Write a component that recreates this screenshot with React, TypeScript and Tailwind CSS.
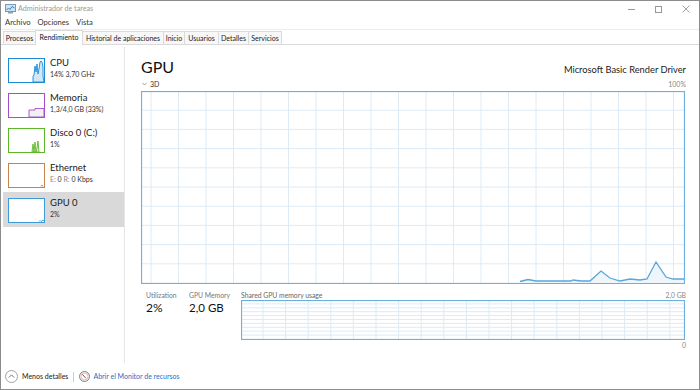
import React from "react";

const FONT = { fontFamily: "'Lato', 'Liberation Sans', sans-serif" };

function Thumb({ color, fill, children }: { color: string; fill: string; children?: React.ReactNode }) {
  return (
    <svg width="37" height="25" viewBox="0 0 37 25" className="shrink-0">
      <rect x="0.5" y="0.5" width="36" height="24" fill="white" stroke={color} strokeWidth="1" />
      <g fill={fill} stroke={color} strokeWidth="0.9">
        {children}
      </g>
    </svg>
  );
}

function SideItem({
  name,
  sub,
  selected,
  thumb,
}: {
  name: string;
  sub: React.ReactNode;
  selected?: boolean;
  thumb: React.ReactNode;
}) {
  return (
    <div className={`flex h-[35px] items-start gap-[5px] pl-[5px] pt-[6px] ${selected ? "bg-[#d9d9d9]" : ""}`}>
      {thumb}
      <div className="flex flex-col leading-none">
        <span className="mt-[0px] text-[9.5px] text-[#1a1a1a]">{name}</span>
        <span className="mt-[3px] text-[7px] text-[#333]">{sub}</span>
      </div>
    </div>
  );
}

function BigChart() {
  const W = 543;
  const H = 192;
  const cols: number[] = [];
  for (let x = 10; x < W; x += 27.5) cols.push(x);
  const rows: number[] = [];
  for (let y = 19.2; y < H - 1; y += 19.2) rows.push(y);
  const pts: [number, number][] = [
    [379, 190.5], [387, 188.5], [395, 190], [430, 190], [432, 189], [440, 190], [449, 190], [460, 180], [469, 187], [479, 190], [489, 188], [499, 189], [506, 188], [515, 171], [525, 186], [532, 188], [543, 188],
  ];
  const line = pts.map((p) => p.join(",")).join(" ");
  const area = `379,191 ${line} 543,191`;
  return (
    <svg width={W + 1} height={H + 1} viewBox={`0 0 ${W + 1} ${H + 1}`} className="block">
      <rect x="0" y="0" width={W + 1} height={H + 1} fill="white" />
      {cols.map((x) => (
        <line key={"c" + x} x1={x} y1="0" x2={x} y2={H} stroke="#dcebf6" strokeWidth="1" />
      ))}
      {rows.map((y) => (
        <line key={"r" + y} x1="0" y1={y} x2={W} y2={y} stroke="#dcebf6" strokeWidth="1" />
      ))}
      <polygon points={area} fill="#eef5fb" />
      <polyline points={line} fill="none" stroke="#5aa6d9" strokeWidth="1.3" />
      <rect x="0.5" y="0.5" width={W} height={H} fill="none" stroke="#6cb0de" strokeWidth="1.2" />
    </svg>
  );
}

function SmallChart() {
  const W = 443;
  const H = 39;
  const cols: number[] = [];
  for (let x = 22; x < W; x += 22.6) cols.push(x);
  const rows: number[] = [];
  for (let y = 3.9; y < H - 1; y += 3.9) rows.push(y);
  return (
    <svg width={W + 1} height={H + 1} viewBox={`0 0 ${W + 1} ${H + 1}`} className="block">
      <rect x="0" y="0" width={W + 1} height={H + 1} fill="white" />
      {cols.map((x) => (
        <line key={"c" + x} x1={x} y1="0" x2={x} y2={H} stroke="#dcebf6" strokeWidth="1" />
      ))}
      {rows.map((y) => (
        <line key={"r" + y} x1="0" y1={y} x2={W} y2={y} stroke="#dcebf6" strokeWidth="1" />
      ))}
      <rect x="0.5" y="0.5" width={W} height={H} fill="none" stroke="#6cb0de" strokeWidth="1.2" />
    </svg>
  );
}

export default function App() {
  const tabs: [string, string][] = [
    ["Procesos", "w-[33px]"],
    ["Rendimiento", "w-[48px]"],
    ["Historial de aplicaciones", "w-[82px]"],
    ["Inicio", "w-[22px]"],
    ["Usuarios", "w-[35px]"],
    ["Detalles", "w-[31px]"],
    ["Servicios", "w-[34px]"],
  ];
  return (
    <div style={FONT} className="flex h-[390px] w-[700px] flex-col overflow-hidden border border-[#8c8c8c] bg-white text-[#1a1a1a]">
      {/* Title bar */}
      <div className="flex h-[16px] shrink-0 items-center">
        <svg width="11" height="10" viewBox="0 0 11 10" className="ml-[4px]">
          <rect x="0.5" y="0.5" width="10" height="7" fill="#cfe3f2" stroke="#7a9bb5" />
          <polyline points="1.5,6 3.5,4 5,5.5 7,2.5 9.5,4" fill="none" stroke="#3b82c4" strokeWidth="1" />
          <rect x="3" y="8" width="5" height="1.5" fill="#8aa" />
        </svg>
        <span className="ml-[2px] text-[7.2px] text-[#9a9a9a]">Administrador de tareas</span>
        <div className="ml-auto flex items-center">
          <div className="flex w-[27px] justify-center">
            <div className="h-px w-[7px] bg-[#999]" />
          </div>
          <div className="flex w-[27px] justify-center">
            <div className="h-[7px] w-[7px] border border-[#999]" />
          </div>
          <div className="flex w-[27px] justify-center">
            <svg width="8" height="8" viewBox="0 0 8 8">
              <path d="M0.5 0.5 L7.5 7.5 M7.5 0.5 L0.5 7.5" stroke="#999" strokeWidth="0.9" />
            </svg>
          </div>
        </div>
      </div>
      {/* Menu */}
      <div className="flex h-[13px] shrink-0 items-center gap-[7px] border-b border-[#ececec] pl-[4px] text-[7.6px] text-[#333]">
        <span>Archivo</span>
        <span>Opciones</span>
        <span>Vista</span>
      </div>
      {/* Tabs */}
      <div className="flex h-[15px] shrink-0 items-end border-b border-[#dadada] pl-[2px]">
        {tabs.map(([t, w]) => {
          const sel = t === "Rendimiento";
          return (
            <div
              key={t}
              className={`-mr-px flex shrink-0 items-center justify-center border border-b-0 text-[7px] ${w} ${
                sel ? "relative z-10 -mb-px h-[15px] border-[#dadada] bg-white pb-[2px] text-[#111]" : "h-[13px] border-[#dadada] bg-[#f7f7f7] text-[#222]"
              }`}
            >
              {t}
            </div>
          );
        })}
      </div>
      {/* Body */}
      <div className="flex min-h-0 flex-1">
        {/* Sidebar */}
        <div className="flex w-[124px] shrink-0 flex-col pl-[2px] pt-[2px]">
          <div className="border-r border-[#e6e6e6] pb-[136px] pt-[5px]">
            <SideItem
              name="CPU"
              sub="14% 3,70 GHz"
              thumb={
                <Thumb color="#1c8ad3" fill="#d3e8f6">
                  <polygon points="25,24 25,18 26,17 27,8 28,14 29,6 30,16 31,11 32,4 33,3 34,4 35,9 35,18 36,24" />
                </Thumb>
              }
            />
            <SideItem
              name="Memoria"
              sub="1,3/4,0 GB (33%)"
              thumb={
                <Thumb color="#a64dc8" fill="#f0f0f0">
                  <polygon points="21,24 21,17 27,17 27,15.5 36,15.5 36,24" />
                </Thumb>
              }
            />
            <SideItem
              name="Disco 0 (C:)"
              sub="1%"
              thumb={
                <Thumb color="#5cb82a" fill="#dff0d2">
                  <polygon points="24,24 25,16 26,24 27,14 28,24 29,20 30,13 31,24" />
                </Thumb>
              }
            />
            <SideItem
              name="Ethernet"
              sub={
                <>
                  <span className="text-[#888]">E:</span> 0 <span className="text-[#888]">R:</span> 0 Kbps
                </>
              }
              thumb={
                <Thumb color="#c4844e" fill="none">
                  <polyline points="33,23.5 34,22 35,23.5" />
                </Thumb>
              }
            />
            <SideItem
              name="GPU 0"
              sub="2%"
              selected
              thumb={
                <Thumb color="#3d9ad8" fill="none">
                  <polyline points="31,23.5 32,22.5 33,23.5 34,23 35,22 36,23" />
                </Thumb>
              }
            />
          </div>
        </div>
        {/* Main */}
        <div className="flex min-w-0 flex-1 flex-col pl-[16px] pr-[13px]">
          <div className="mt-[10px] flex h-[20px] items-end justify-between">
            <span className="text-[16px] leading-none text-[#111]">GPU</span>
            <span className="mb-[1px] text-[9.3px] leading-none text-[#222]">Microsoft Basic Render Driver</span>
          </div>
          <div className="mt-[4px] flex h-[10px] items-center justify-between text-[7px] leading-none">
            <span className="flex items-center gap-[3px] pl-[1px] text-[#333]">
              <svg width="5" height="4" viewBox="0 0 5 4">
                <polyline points="0.5,1 2.5,3 4.5,1" fill="none" stroke="#888" strokeWidth="0.8" />
              </svg>
              3D
            </span>
            <span className="text-[#888]">100%</span>
          </div>
          <div className="mt-[2px]">
            <BigChart />
          </div>
          <div className="mt-[8px] flex">
            <div className="flex w-[48px] shrink-0 flex-col pl-[5px]">
              <span className="text-[6.8px] leading-none text-[#777]">Utilization</span>
              <span className="mt-[3px] text-[12px] leading-none text-[#111]">2%</span>
            </div>
            <div className="flex w-[52px] shrink-0 flex-col">
              <span className="text-[6.8px] leading-none text-[#777]">GPU Memory</span>
              <span className="mt-[3px] text-[11.5px] leading-none text-[#111]">2,0 GB</span>
            </div>
            <div className="flex flex-1 flex-col">
              <div className="flex justify-between text-[6.8px] leading-none">
                <span className="text-[#666]">Shared GPU memory usage</span>
                <span className="text-[#888]">2,0 GB</span>
              </div>
              <div className="mt-[1px]">
                <SmallChart />
              </div>
              <div className="mt-[2px] text-right text-[7px] leading-none text-[#888]">0</div>
            </div>
          </div>
        </div>
      </div>
      {/* Footer */}
      <div className="flex h-[28px] shrink-0 items-center pl-[4px] pt-[3px] text-[7px]">
        <svg width="13" height="13" viewBox="0 0 13 13">
          <circle cx="6.5" cy="6.5" r="6" fill="white" stroke="#999" strokeWidth="0.9" />
          <polyline points="3.8,7.6 6.5,4.9 9.2,7.6" fill="none" stroke="#666" strokeWidth="0.9" />
        </svg>
        <span className="ml-[4px] text-[#1a1a1a]">Menos detalles</span>
        <div className="mx-[5px] h-[10px] w-px bg-[#ccc]" />
        <svg width="11" height="11" viewBox="0 0 11 11">
          <circle cx="5.5" cy="5.5" r="5" fill="#f2f2f2" stroke="#777" strokeWidth="0.9" />
          <circle cx="5.5" cy="5.5" r="3.4" fill="white" stroke="#aaa" strokeWidth="0.6" />
          <line x1="3.3" y1="3.3" x2="6.8" y2="7.2" stroke="#c0392b" strokeWidth="1" />
        </svg>
        <span className="ml-[3px] text-[#1a6fc9]">Abrir el Monitor de recursos</span>
      </div>
    </div>
  );
}
